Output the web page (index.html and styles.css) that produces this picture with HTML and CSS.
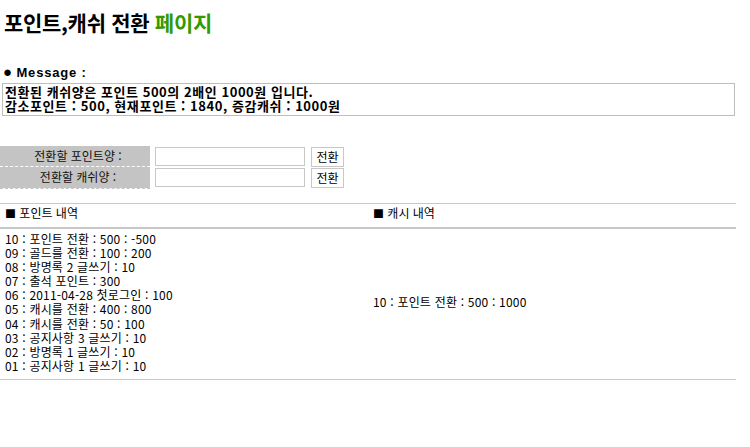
FILE: index.html
```html
<!DOCTYPE html>
<html lang="ko">
<head>
<meta charset="utf-8">
<link rel="stylesheet" href="styles.css">
</head>
<body>
<div class="page">
  <h1 class="title">포인트,캐쉬 전환 <span class="green">페이지</span></h1>
  <div class="msg-label"><span class="dot">●</span> Message :</div>
  <div class="msg-box">전환된 캐쉬양은 포인트 500의 2배인 1000원 입니다.<br>감소포인트 : 500, 현재포인트 : 1840, 증감캐쉬 : 1000원</div>

  <div class="form">
    <div class="row first">
      <div class="label">전환할 포인트양 :</div>
      <input class="field" type="text">
      <button class="btn">전환</button>
    </div>
    <div class="row second">
      <div class="label">전환할 캐쉬양 :</div>
      <input class="field" type="text">
      <button class="btn">전환</button>
    </div>
  </div>

  <div class="history">
    <div class="head">
      <div class="col"><span class="sq">■</span> 포인트 내역</div>
      <div class="col right"><span class="sq">■</span> 캐시 내역</div>
    </div>
    <div class="body">
      <div class="col list">
        <div class="line">10 : 포인트 전환 : 500 : -500</div>
        <div class="line">09 : 골드를 전환 : 100 : 200</div>
        <div class="line">08 : 방명록 2 글쓰기 : 10</div>
        <div class="line">07 : 출석 포인트 : 300</div>
        <div class="line">06 : 2011-04-28 첫로그인 : 100</div>
        <div class="line">05 : 캐시를 전환 : 400 : 800</div>
        <div class="line">04 : 캐시를 전환 : 50 : 100</div>
        <div class="line">03 : 공지사항 3 글쓰기 : 10</div>
        <div class="line">02 : 방명록 1 글쓰기 : 10</div>
        <div class="line">01 : 공지사항 1 글쓰기 : 10</div>
      </div>
      <div class="col right center">
        <div class="line">10 : 포인트 전환 : 500 : 1000</div>
      </div>
    </div>
  </div>
</div>
</body>
</html>
```

FILE: styles.css
```css
html, body {
  margin: 0;
  padding: 0;
  background: #fff;
}
body {
  font-family: "Noto Sans CJK KR", "DejaVu Sans", sans-serif;
  font-size: 12px;
  color: #000;
}
.page {
  width: 736px;
  padding-top: 8px;
}
.title {
  margin: 0 0 0 4px;
  font-size: 21px;
  line-height: 28px;
  font-weight: bold;
  letter-spacing: -0.3px;
}
.green {
  color: #339900;
}
.msg-label {
  margin: 29px 0 0 3px;
  font-weight: bold;
  font-family: "Liberation Sans", "Noto Sans CJK KR", sans-serif;
  font-size: 13px;
  line-height: 14px;
  letter-spacing: 0.8px;
}
.dot {
  font-size: 15px;
  letter-spacing: 0;
}
.msg-box {
  margin: 3px 0 0 2px;
  width: 733px;
  box-sizing: border-box;
  height: 33px;
  border: 1px solid #bdbdbd;
  padding: 1px 0 0 2px;
  font-weight: bold;
  font-size: 13px;
  line-height: 14px;
  letter-spacing: 0.55px;
  overflow: hidden;
}
.form {
  margin-top: 30px;
  width: 360px;
}
.row {
  display: flex;
  align-items: center;
  height: 21px;
}
.label {
  width: 150px;
  height: 21px;
  box-sizing: border-box;
  background: #c4c4c4;
  text-align: center;
  line-height: 20px;
  padding-left: 6px;
  color: #111;
}
.row.first .label {
  border-bottom: 1px dashed #fff;
}
.row.second .label {
  height: 22px;
  border-bottom: 1px dashed #c4c4c4;
  background: linear-gradient(#c4c4c4, #c4c4c4) top / 100% 21px no-repeat;
}
.field {
  margin: 0 0 0 5px;
  width: 150px;
  height: 19px;
  box-sizing: border-box;
  border: 1px solid #c8c8c8;
  padding: 0;
}
.btn {
  margin-left: 6px;
  width: 33px;
  height: 20px;
  box-sizing: border-box;
  border: 1px solid #c8c8c8;
  background: #fff;
  padding: 0;
  font-family: "Noto Sans CJK KR", sans-serif;
  font-size: 12px;
  line-height: 16px;
  color: #000;
}
.history {
  margin-top: 15px;
  border-top: 1px solid #c8c8c8;
  border-bottom: 1px solid #c8c8c8;
}
.head {
  display: flex;
  height: 25px;
  box-sizing: border-box;
  padding-top: 2px;
  line-height: 14px;
  border-bottom: 2px solid #c8c8c8;
}
.col {
  width: 368px;
  padding-left: 5px;
  box-sizing: border-box;
}
.sq {
  font-size: 11px;
}
.body {
  display: flex;
  padding: 3px 0 6px;
}
.list {
  letter-spacing: 0.2px;
}
.line {
  height: 14.1px;
  line-height: 14px;
  white-space: nowrap;
}
.center {
  display: flex;
  align-items: center;
  letter-spacing: 0.2px;
}
```
